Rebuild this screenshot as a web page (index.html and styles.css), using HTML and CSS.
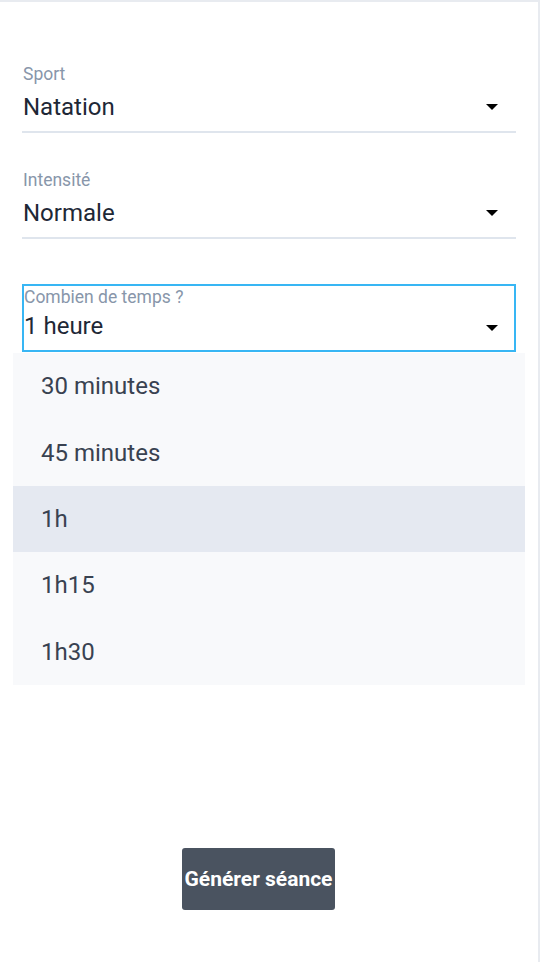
FILE: index.html
```html
<!DOCTYPE html>
<html lang="fr">
<head>
<meta charset="utf-8">
<title>Générer séance</title>
<link rel="stylesheet" href="styles.css">
</head>
<body>
<div class="page">
  <div class="form">
    <div class="field">
      <div class="label">Sport</div>
      <div class="value-row"><span class="value">Natation</span><span class="caret"></span></div>
    </div>
    <div class="field second">
      <div class="label">Intensité</div>
      <div class="value-row"><span class="value">Normale</span><span class="caret"></span></div>
    </div>
    <div class="field focused">
      <div class="label">Combien de temps ?</div>
      <div class="value-row"><span class="value">1 heure</span><span class="caret"></span></div>
      <ul class="menu">
        <li class="item">30 minutes</li>
        <li class="item">45 minutes</li>
        <li class="item active">1h</li>
        <li class="item">1h15</li>
        <li class="item">1h30</li>
      </ul>
    </div>
    <button class="btn" type="button">Générer séance</button>
  </div>
</div>
</body>
</html>
```
FILE: styles.css
```css
* { box-sizing: border-box; }
html, body { margin: 0; padding: 0; background: #ffffff; }
body { font-family: Roboto, "Noto Sans", Arial, sans-serif; }
.page {
  width: 540px;
  height: 962px;
  border-top: 2px solid #e8ebf0;
  border-right: 2px solid #e8ebf0;
  background: #ffffff;
}
.form {
  padding: 62px 22px 0 22px;
  display: flex;
  flex-direction: column;
  align-items: flex-start;
}
.field {
  width: 494px;
  position: relative;
  border-bottom: 2px solid #dfe5ed;
  padding: 0 0 10px 1px;
}
.field.second { margin-top: 37px; }
.label {
  font-size: 17.5px;
  line-height: 20px;
  color: #8896aa;
}
.value-row {
  display: flex;
  align-items: center;
  justify-content: space-between;
  margin-top: 9px;
  height: 28px;
}
.value {
  font-size: 24px;
  line-height: 28px;
  color: #1e2836;
}
.caret {
  width: 0;
  height: 0;
  border-left: 6px solid transparent;
  border-right: 6px solid transparent;
  border-top: 6px solid #000000;
  margin-right: 18px;
}
.field.focused {
  margin-top: 45px;
  border: 2px solid #38b6f4;
  padding: 1px 0 10px 0;
}
.field.focused .value-row { margin-top: 5px; }
.field.focused .caret { margin-right: 16px; margin-top: 4px; }
.menu {
  position: absolute;
  top: calc(100% + 3px);
  left: -11px;
  right: -11px;
  margin: 0;
  padding: 0;
  list-style: none;
  background: #f8f9fb;
  z-index: 2;
}
.item {
  height: 66.4px;
  display: flex;
  align-items: center;
  padding-left: 28px;
  font-size: 24px;
  color: #394251;
}
.item.active { background: #e5e9f1; }
.btn {
  margin-top: 496px;
  margin-left: 160px;
  width: 153px;
  height: 62px;
  padding: 0;
  border: none;
  border-radius: 3px;
  background: #4a5360;
  color: #ffffff;
  font-family: Roboto, "Noto Sans", Arial, sans-serif;
  font-weight: 700;
  font-size: 21px;
  white-space: nowrap;
}
```
